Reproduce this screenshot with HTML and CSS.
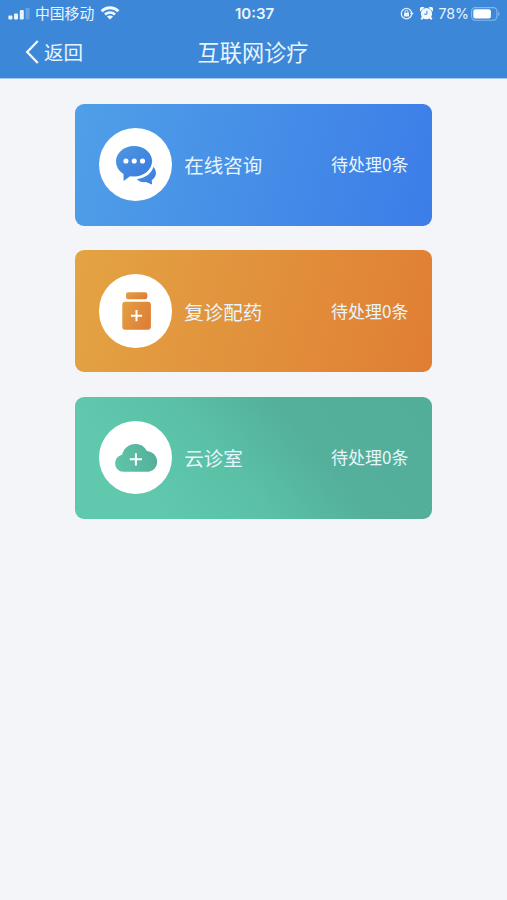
FILE: index.html
```html
<!DOCTYPE html>
<html lang="zh-CN">
<head>
    <meta charset="UTF-8">
    <meta name="viewport" content="width=device-width, initial-scale=1.0">
    <title>互联网诊疗</title>
    <link rel="stylesheet" href="styles.css">
</head>
<body>
    <header class="header">
        <!-- Status bar -->
        <div class="status-bar">
            <div class="status-left">
                <svg class="signal" width="22" height="12" viewBox="0 0 22 12" fill="#e9f5fd">
                    <rect x="0.4" y="7.5" width="4" height="4" rx="1" />
                    <rect x="6" y="5.5" width="4" height="6" rx="1" />
                    <rect x="11.8" y="2" width="4" height="9.5" rx="1" />
                    <rect x="17.6" y="0" width="4" height="11.5" rx="1" opacity="0.25" />
                </svg>
                <span class="carrier">中国移动</span>
                <svg class="wifi" width="20" height="14" viewBox="0 0 20 14">
                    <g fill="none" stroke="#f2fafe" stroke-width="2.8">
                        <path d="M1.6 5.2 C6.3 0.6 13.7 0.6 18.4 5.2" />
                        <path d="M5 8.6 C7.9 5.9 12.1 5.9 15 8.6" />
                    </g>
                    <path d="M10 13.6 L6.9 10.6 C8.6 9.1 11.4 9.1 13.1 10.6 Z" fill="#f2fafe" />
                </svg>
            </div>
            <div class="time">10:37</div>
            <div class="status-right">
                <svg class="lock" width="14" height="13" viewBox="0 0 14 13">
                    <circle cx="6.5" cy="6.6" r="5.2" fill="none" stroke="#dceefb" stroke-width="1.3" />
                    <path d="M9.8 5.7 H13.8 L11.8 8.5 Z" fill="#dceefb" />
                    <rect x="4" y="5.8" width="5" height="3.8" rx="0.6" fill="#e9f5fd" />
                    <path d="M5 6 V4.8 A1.5 1.5 0 0 1 8 4.8 V6" fill="none" stroke="#e9f5fd" stroke-width="1" />
                </svg>
                <svg class="alarm" width="13" height="13" viewBox="0 0 13 13">
                    <circle cx="6.5" cy="6.7" r="5.6" fill="#f2fafe" />
                    <path d="M0.2 4.4 A2.4 2.4 0 0 1 4.4 0.8 Z M12.8 4.4 A2.4 2.4 0 0 0 8.6 0.8 Z" fill="#f2fafe" />
                    <path d="M2.8 10.3 L1.3 12.4 M10.2 10.3 L11.7 12.4" stroke="#f2fafe" stroke-width="2" />
                    <path d="M6.9 3.8 V7.2 H4.2" fill="none" stroke="#3d87d8" stroke-width="1" />
                </svg>
                <span class="percent">78%</span>
                <svg class="battery" width="30" height="14" viewBox="0 0 30 14">
                    <rect x="0.6" y="0.6" width="25.3" height="12.6" rx="3.6" fill="none" stroke="#86b9ed" stroke-width="1.1" />
                    <rect x="2.3" y="2.3" width="17.6" height="9.2" rx="2" fill="#fff" />
                    <path d="M27.2 4.6 A2.6 2.6 0 0 1 27.2 9.2 Z" fill="#86b9ed" />
                </svg>
            </div>
        </div>

        <!-- Navigation bar -->
        <div class="nav-bar">
            <div class="back">
                <svg width="14" height="26" viewBox="0 0 14 26">
                    <path d="M12.8 2 L2.2 13 L12.8 24" fill="none" stroke="#f2fafe" stroke-width="2.3" />
                </svg>
                <span>返回</span>
            </div>
            <h1 class="title">互联网诊疗</h1>
        </div>
    </header>

    <main class="card-list">
        <div class="card card-consult">
            <div class="icon">
                <svg width="73" height="73" viewBox="0 0 74 74">
                    <defs>
                        <linearGradient id="blue" x1="0" y1="0" x2="1" y2="1">
                            <stop offset="0" stop-color="#4f97e2" />
                            <stop offset="1" stop-color="#3779dd" />
                        </linearGradient>
                    </defs>
                    <path d="M55.2 39.4 C59.4 44.6 58 50 53.4 53 L53.8 57.4 L47.6 54.8 C44 55.4 40.5 54.2 38.4 51.9 C46.6 51 53.2 46.4 55.2 39.4 Z" fill="url(#blue)" />
                    <path d="M35.6 18.2 C45.8 18.2 53.8 25 53.8 33.5 C53.8 42 45.8 49.2 35.6 49.2 L31.4 48.8 L25 53.8 L24.8 46.6 C20 43.7 17.3 39 17.3 33.5 C17.3 25 25.4 18.2 35.6 18.2 Z" fill="url(#blue)" />
                    <g fill="#fff">
                        <circle cx="27.3" cy="33.4" r="2.6" />
                        <circle cx="35.7" cy="33.4" r="2.6" />
                        <circle cx="44.1" cy="33.4" r="2.6" />
                    </g>
                </svg>
            </div>
            <div class="name">在线咨询</div>
            <div class="count">待处理0条</div>
        </div>

        <div class="card card-medicine">
            <div class="icon">
                <svg width="73" height="73" viewBox="0 0 74 74">
                    <defs>
                        <linearGradient id="orange" x1="0" y1="0" x2="1" y2="0.5">
                            <stop offset="0" stop-color="#e3a043" />
                            <stop offset="1" stop-color="#df8038" />
                        </linearGradient>
                    </defs>
                    <rect x="27.4" y="18.6" width="21.6" height="7" rx="2.2" fill="url(#orange)" />
                    <rect x="23.6" y="28.2" width="29" height="28.2" rx="3" fill="url(#orange)" />
                    <path d="M38 36.6 V48 M32.3 42.3 H43.7" stroke="#fff" stroke-width="2" />
                </svg>
            </div>
            <div class="name">复诊配药</div>
            <div class="count">待处理0条</div>
        </div>

        <div class="card card-cloud">
            <div class="icon">
                <svg width="73" height="73" viewBox="0 0 74 74">
                    <defs>
                        <linearGradient id="green" x1="0" y1="0.5" x2="1" y2="0.3">
                            <stop offset="0" stop-color="#5fc4a8" />
                            <stop offset="1" stop-color="#54ae9a" />
                        </linearGradient>
                    </defs>
                    <path d="M24.8 51.4 C19.8 51.4 16.4 47.6 16.4 43 C16.4 38.6 19.4 35.2 23.4 34.2 C25 27.4 30.2 23.2 36.8 23.2 C42.2 23.2 46 25.8 48.6 30.4 C54.8 31 59 35.8 59 41.4 C59 47 54.8 51.4 49.6 51.4 Z" fill="url(#green)" />
                    <path d="M37.4 32.6 V45 M31.2 38.8 H43.6" stroke="#fff" stroke-width="2" />
                </svg>
            </div>
            <div class="name">云诊室</div>
            <div class="count">待处理0条</div>
        </div>
    </main>
</body>
</html>
```
FILE: styles.css
```css
* {
    box-sizing: border-box;
}

body {
    margin: 0;
    min-height: 100vh;
    background-color: #f3f5f8;
    font-family: Inter, "Noto Sans CJK SC", sans-serif;
    color: #e9f5fd;
}

svg {
    display: block;
    flex-shrink: 0;
}

.header {
    height: 79px;
    background-color: #3d87d8;
    border-bottom: 1px solid #a5c9ee;
}

/* Status bar */
.status-bar {
    display: grid;
    grid-template-columns: 1fr auto 1fr;
    align-items: center;
    height: 27px;
    padding: 0 6px 0 8px;
}

.status-left,
.status-right {
    display: flex;
    align-items: center;
}

.status-right {
    justify-content: flex-end;
}

.carrier {
    margin: 0 6px 0 5px;
    font-family: "Noto Sans CJK SC", sans-serif;
    font-size: 14.8px;
    line-height: 26px;
    height: 27px;
}

.wifi {
    margin-bottom: 1px;
}

.time {
    font-size: 15px;
    font-weight: 600;
}

.alarm {
    margin: 0 5px 0 6px;
}

.percent {
    margin-right: 2px;
    font-size: 14.2px;
}

/* Navigation bar */
.nav-bar {
    display: grid;
    grid-template-columns: 1fr auto 1fr;
    align-items: center;
    height: 50px;
    padding: 0 26px 0 25px;
}

.back {
    display: flex;
    align-items: center;
    gap: 5px;
    font-size: 19.5px;
}

.back span {
    padding-bottom: 2px;
}

.title {
    margin: 0;
    padding-bottom: 3px;
    font-size: 22.2px;
    font-weight: 400;
}

/* Cards */
.card-list {
    display: flex;
    flex-direction: column;
    gap: 24.6px;
    width: 357px;
    margin: 24.5px 0 0 75px;
}

.card {
    display: flex;
    align-items: center;
    height: 122px;
    padding: 0 23.5px;
    border-radius: 9px;
}

.card-consult {
    background: linear-gradient(105deg, #509fe7, #3c7de8);
}

.card-medicine {
    background: linear-gradient(105deg, #e3a443, #e07e34);
}

.card-cloud {
    background: linear-gradient(50deg, #5fc8ad 20%, #5ac1a7 42%, #54b09b 65%, #53ae99);
}

.icon {
    width: 73.4px;
    height: 73.4px;
    border-radius: 50%;
    background-color: #fff;
}

.name {
    margin-left: 12.3px;
    font-size: 19.5px;
}

.count {
    margin-left: auto;
    padding-bottom: 2px;
    font-family: "Noto Sans CJK SC", sans-serif;
    font-size: 17px;
}
```
